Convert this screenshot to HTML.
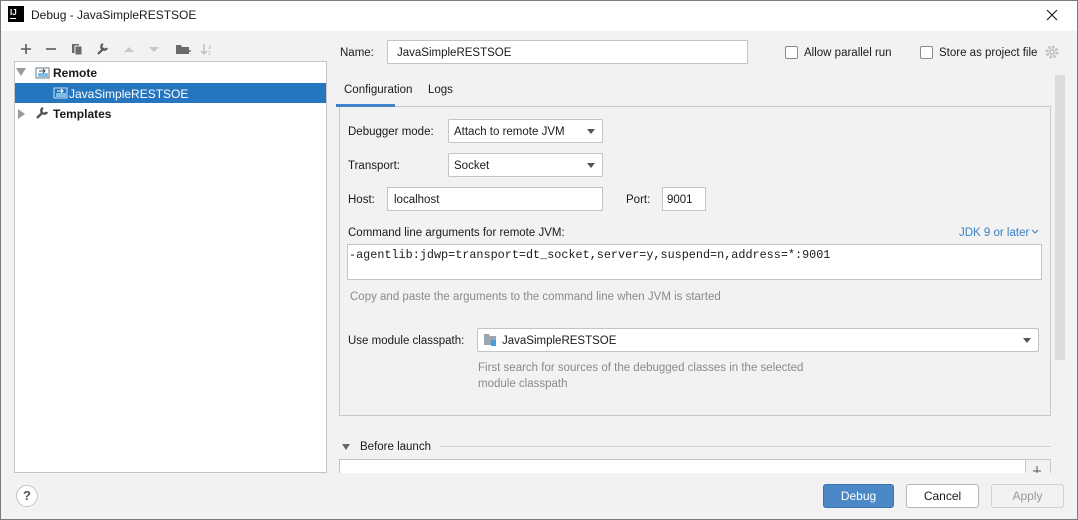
<!DOCTYPE html>
<html><head><meta charset="utf-8"><style>
*{box-sizing:border-box;margin:0;padding:0}
body{width:1078px;height:520px;overflow:hidden;background:#f2f2f2;font-family:"Liberation Sans",sans-serif;font-size:11.5px;color:#1a1a1a;position:relative}
.a{position:absolute}
.t{position:absolute;white-space:nowrap;line-height:14px}
.inp{position:absolute;background:#fff;border:1px solid #c4c4c4}
.cb{position:absolute;width:13px;height:13px;border:1px solid #8a8a8a;background:#fff;border-radius:2px}
.arr{position:absolute;width:0;height:0;border-left:4px solid transparent;border-right:4px solid transparent;border-top:5px solid #555}
.btn{position:absolute;height:24px;border:1px solid #b8b8b8;background:#fff;border-radius:3px;text-align:center;line-height:22px;font-size:12px}
</style></head><body>
<div class="a" style="left:0;top:0;width:1078px;height:520px;border:1px solid #7a7a7a;pointer-events:none;z-index:9"></div>
<div class="a" style="left:0;top:0;width:1078px;height:31px;background:#fff"></div>
<div class="a" style="left:8px;top:6px;width:16px;height:16px;background:#000"><div class="t" style="left:2px;top:0;color:#fff;font-size:8px;font-weight:bold">IJ</div><div class="a" style="left:2px;top:12px;width:6px;height:1px;background:#fff"></div></div>
<div class="t" style="left:31px;top:8px;font-size:12px">Debug - JavaSimpleRESTSOE</div>
<svg class="a" style="left:1046px;top:9px" width="12" height="12"><path d="M1 1L11 11M11 1L1 11" stroke="#222" stroke-width="1.2"/></svg>

<!-- toolbar -->
<svg class="a" style="left:18px;top:42px" width="200" height="14">
<path d="M3 7H13M8 2V12" stroke="#5a5a5a" stroke-width="1.6"/>
<path d="M28 7H38" stroke="#5a5a5a" stroke-width="1.6"/>
<rect x="54" y="2" width="7" height="9" fill="#6a6a6a"/><rect x="57" y="4" width="7" height="9" fill="#6a6a6a" stroke="#f2f2f2" stroke-width="1"/>
<path d="M80 12L86 6M85 2a3 3 0 1 0 4 4" stroke="#5a5a5a" stroke-width="2.2" fill="none"/>
<path d="M106 10L111 5L116 10Z" fill="#c8c8c8"/><path d="M131 5L136 10L141 5Z" fill="#c8c8c8"/>
<path d="M158 3H163L164 5H171V12H158Z" fill="#6a6a6a"/><path d="M167 9H173M170 6V12" stroke="#6a6a6a" stroke-width="1.6"/>
<path d="M186 2V12M183 9L186 12L189 9" stroke="#bbb" stroke-width="1.3" fill="none"/><text x="190" y="7" font-size="6" fill="#bbb">a</text><text x="190" y="13" font-size="6" fill="#bbb">z</text>
</svg>

<!-- tree -->
<div class="a" style="left:14px;top:61px;width:313px;height:412px;background:#fff;border:1px solid #c4c4c4"></div>
<div class="a" style="left:16px;top:68px;width:0;height:0;border-left:5px solid transparent;border-right:5px solid transparent;border-top:8px solid #9a9a9a"></div>
<svg class="a" style="left:35px;top:66px" width="16" height="14"><rect x="1" y="2" width="13" height="10" fill="#fff" stroke="#6a7a8a"/><rect x="3" y="7" width="10" height="4" fill="#7fc0e8"/><path d="M4 5H10M8 3L10 5L8 7" stroke="#444" fill="none"/></svg>
<div class="t" style="left:53px;top:66px;font-weight:bold;font-size:12px">Remote</div>
<div class="a" style="left:15px;top:83px;width:311px;height:20px;background:#2675bf"></div>
<svg class="a" style="left:53px;top:86px" width="16" height="14"><rect x="1" y="2" width="13" height="10" fill="#2675bf" stroke="#cde"/><rect x="3" y="7" width="10" height="4" fill="#7fc0e8"/><path d="M4 5H10M8 3L10 5L8 7" stroke="#fff" fill="none"/></svg>
<div class="t" style="left:69px;top:87px;color:#fff;font-size:12px">JavaSimpleRESTSOE</div>
<div class="a" style="left:18px;top:109px;width:0;height:0;border-top:5px solid transparent;border-bottom:5px solid transparent;border-left:7px solid #9a9a9a"></div>
<svg class="a" style="left:35px;top:106px" width="14" height="14"><path d="M2 12L8 6M8 2a3 3 0 1 0 4 4" stroke="#555" stroke-width="2.4" fill="none"/></svg>
<div class="t" style="left:53px;top:107px;font-weight:bold;font-size:12px">Templates</div>

<!-- top right -->
<div class="t" style="left:340px;top:46px">Name:</div>
<div class="inp" style="left:387px;top:40px;width:361px;height:24px"></div>
<div class="t" style="left:397px;top:46px">JavaSimpleRESTSOE</div>
<div class="cb" style="left:785px;top:46px"></div><div class="t" style="left:804px;top:46px">Allow parallel run</div>
<div class="cb" style="left:920px;top:46px"></div><div class="t" style="left:939px;top:46px">Store as project file</div>
<svg class="a" style="left:1045px;top:45px" width="14" height="14"><circle cx="7" cy="7" r="5" fill="none" stroke="#c4c4c4" stroke-width="3" stroke-dasharray="2.5 1.4"/><circle cx="7" cy="7" r="3" fill="#c4c4c4"/><circle cx="7" cy="7" r="1.3" fill="#f2f2f2"/></svg>

<div class="a" style="left:1055px;top:75px;width:10px;height:285px;background:#dcdcdc"></div>
<div class="t" style="left:344px;top:83px">Configuration</div>
<div class="t" style="left:428px;top:83px">Logs</div>
<div class="a" style="left:339px;top:106px;width:712px;height:310px;border:1px solid #c8c8c8;background:#f2f2f2"></div>
<div class="a" style="left:336px;top:104px;width:59px;height:3px;background:#4083c9"></div>

<div class="t" style="left:348px;top:125px">Debugger mode:</div>
<div class="inp" style="left:448px;top:119px;width:155px;height:24px;border-radius:2px"></div>
<div class="t" style="left:454px;top:125px">Attach to remote JVM</div><div class="arr" style="left:587px;top:129px"></div>
<div class="t" style="left:348px;top:159px">Transport:</div>
<div class="inp" style="left:448px;top:153px;width:155px;height:24px;border-radius:2px"></div>
<div class="t" style="left:454px;top:159px">Socket</div><div class="arr" style="left:587px;top:163px"></div>
<div class="t" style="left:348px;top:193px">Host:</div>
<div class="inp" style="left:387px;top:187px;width:216px;height:24px"></div>
<div class="t" style="left:394px;top:193px">localhost</div>
<div class="t" style="left:626px;top:193px">Port:</div>
<div class="inp" style="left:662px;top:187px;width:44px;height:24px"></div>
<div class="t" style="left:667px;top:193px">9001</div>

<div class="t" style="left:348px;top:226px">Command line arguments for remote JVM:</div>
<div class="t" style="left:959px;top:226px;color:#3b7fc4">JDK 9 or later</div>
<svg class="a" style="left:1031px;top:229px" width="8" height="6"><path d="M1 1L4 4L7 1" stroke="#3b7fc4" fill="none"/></svg>
<div class="inp" style="left:347px;top:244px;width:695px;height:36px"></div>
<div class="t" style="left:349px;top:248px;font-family:'Liberation Mono',monospace;font-size:11.8px">-agentlib:jdwp=transport=dt_socket,server=y,suspend=n,address=*:9001</div>
<div class="t" style="left:350px;top:290px;color:#8a8a8a">Copy and paste the arguments to the command line when JVM is started</div>

<div class="t" style="left:348px;top:334px">Use module classpath:</div>
<div class="inp" style="left:477px;top:328px;width:562px;height:24px;border-radius:2px"></div>
<svg class="a" style="left:484px;top:333px" width="14" height="14"><path d="M0 1H5L6 3H12V12H0Z" fill="#9aa7b0"/><rect x="7" y="7" width="5" height="6" fill="#40a0e0"/></svg>
<div class="t" style="left:502px;top:334px">JavaSimpleRESTSOE</div><div class="arr" style="left:1023px;top:338px"></div>
<div class="t" style="left:478px;top:361px;color:#8a8a8a">First search for sources of the debugged classes in the selected</div>
<div class="t" style="left:478px;top:377px;color:#8a8a8a">module classpath</div>

<div class="a" style="left:342px;top:444px;width:0;height:0;border-left:4.5px solid transparent;border-right:4.5px solid transparent;border-top:6px solid #666"></div>
<div class="t" style="left:360px;top:440px">Before launch</div>
<div class="a" style="left:440px;top:446px;width:611px;height:1px;background:#d0d0d0"></div>
<div class="inp" style="left:339px;top:459px;width:687px;height:20px;border-bottom:none"></div>
<div class="a" style="left:1025px;top:459px;width:26px;height:14px;border:1px solid #c8c8c8;border-bottom:none;background:#f2f2f2"></div>
<svg class="a" style="left:1032px;top:466px" width="10" height="8"><path d="M5 0V8M1 5H9" stroke="#555"/></svg>
<div class="a" style="left:0;top:473px;width:1078px;height:47px;background:#f2f2f2"></div>

<div class="a" style="left:16px;top:485px;width:22px;height:22px;border-radius:50%;border:1px solid #c4c4c4;background:#fff;text-align:center;line-height:20px;font-weight:bold;color:#555;font-size:13px">?</div>
<div class="btn" style="left:823px;top:484px;width:71px;background:#4a88c7;border-color:#3a74b0;color:#fff">Debug</div>
<div class="btn" style="left:906px;top:484px;width:73px">Cancel</div>
<div class="btn" style="left:991px;top:484px;width:73px;background:#f2f2f2;border-color:#d0d0d0;color:#999">Apply</div>
</body></html>
